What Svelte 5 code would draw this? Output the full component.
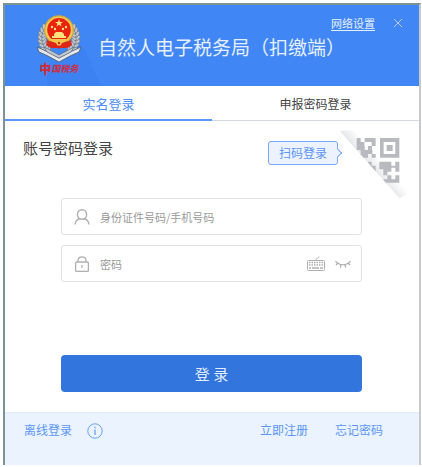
<script lang="ts">
  let mode = $state('realname');
  let account = $state('');
  let password = $state('');
  let showPassword = $state(false);

  // angles of the grains in the emblem wreath, bottom to top
  const grains = [-48, -36, -24, -12, 0, 12, 24, 36];
  const keys = [0, 1, 2, 3, 4, 5];
</script>

<div class="window">
  <header>
    <svg class="facet" viewBox="0 0 100 81" aria-hidden="true">
      <path d="M42 81V62L74 39L80 45L96 81Z" fill="#3d82f2" />
    </svg>
    <div class="emblem">
      <svg viewBox="0 0 46 48" width="46" height="48" aria-hidden="true">
        {#each grains as a}
          <g fill="#c0c6cd" stroke="#65717f" stroke-width="0.6">
            <ellipse cx="4.5" cy="24" rx="3.4" ry="1.8" transform="rotate({a} 23 24) rotate(50 4.5 24)" />
            <ellipse cx="8" cy="24" rx="3.2" ry="1.6" transform="rotate({a} 23 24) rotate(-50 8 24)" />
            <ellipse cx="41.5" cy="24" rx="3.4" ry="1.8" transform="rotate({-a} 23 24) rotate(-50 41.5 24)" />
            <ellipse cx="38" cy="24" rx="3.2" ry="1.6" transform="rotate({-a} 23 24) rotate(50 38 24)" />
          </g>
        {/each}
        <path d="M1 33L12 38L23 44L34 38L45 33L43 38L34 42L23 48L12 42L3 38Z" fill="#e4e8ec" stroke="#4b5868" stroke-width="0.8" />
        <path d="M8 33L23 41L38 33L35 38L23 44L11 38Z" fill="#c3cad2" stroke="#5d6877" stroke-width="0.7" />
        <path d="M12 24H34L36 31L31 34H15L10 31Z" fill="#dc281a" />
        <circle cx="23" cy="16" r="14.8" fill="#d8a836" />
        <circle cx="23" cy="16" r="13.6" fill="#efcc55" />
        <circle cx="23" cy="15.8" r="11.8" fill="#e9230f" />
        <path d="M23 5L24 8H27L24.6 9.8L25.5 12.5L23 10.8L20.5 12.5L21.4 9.8L19 8H22Z" fill="#ffe27a" />
        <g fill="#ffe27a">
          <circle cx="16" cy="13" r="1.2" /><circle cx="19" cy="15" r="1.2" />
          <circle cx="27" cy="15" r="1.2" /><circle cx="30" cy="13" r="1.2" />
          <path d="M18 20L20 18H26L28 20V22H30V24H16V22H18Z" />
        </g>
        <path d="M15 25H31L29 28H17Z" fill="#efc64b" />
        <path d="M14 27L23 30L32 27L34 33L27 31L23 35L19 31L12 33Z" fill="#dc281a" />
        <circle cx="23" cy="29" r="2.6" fill="#efc64b" />
        <circle cx="23" cy="29" r="1.2" fill="#dc281a" />
      </svg>
      <span class="motto"><b>中</b>国税务</span>
    </div>
    <h1>自然人电子税务局（扣缴端）</h1>
    <div class="window-tools">
      <a href="#network">网络设置</a>
      <button class="close" aria-label="关闭">
        <svg viewBox="0 0 10 10" width="10" height="10"><path d="M1 1L9 9M9 1L1 9" stroke="#b9cdf2" fill="none" /></svg>
      </button>
    </div>
  </header>

  <nav>
    <button class="tab" class:active={mode === 'realname'} onclick={() => mode = 'realname'}>实名登录</button>
    <button class="tab small" class:active={mode === 'declare'} onclick={() => mode = 'declare'}>申报密码登录</button>
  </nav>

  <main>
    <div class="heading">
      <h2>账号密码登录</h2>
      <button class="scan">扫码登录</button>
      <svg class="qr" viewBox="0 6 201 210" width="67" height="70" aria-hidden="true">
        <defs>
          <linearGradient id="fold" gradientUnits="userSpaceOnUse" x1="88" y1="118" x2="116" y2="94">
            <stop offset="0" stop-color="#e6e7e9" />
            <stop offset="1" stop-color="#fff" />
          </linearGradient>
          <clipPath id="page"><path d="M0 16V0H201V216H178Z" /></clipPath>
        </defs>
        <path d="M0 16L40 10L201 190V206L178 216Z" fill="url(#fold)" />
        <g clip-path="url(#page)" fill="#b9bac0">
          <path fill-rule="evenodd" d="M120 36H178V95H120ZM131 48V84H166V48ZM140 57H158V75H140Z" />
          <path d="M50 36H62V48H73V60H50ZM74 36H107V60H95V48H74ZM50 60H74V72H97V84H107V95H95V84H84V95H50V84H62V72H50ZM84 60H96V72H84Z" />
          <path d="M84 107H95V119H107V137H95V130H84Z" />
          <path d="M118 107H154V119H166V107H178V137H166V125H154V137H142V148H154V160H166V148H178V170H130V160H142V148H130V130H118Z" />
        </g>
      </svg>
    </div>

    <form onsubmit={(e) => e.preventDefault()}>
      <label class="field">
        <svg viewBox="0 0 16 16" width="16" height="16" fill="none" stroke="#b0b0b0" stroke-width="1.4">
          <ellipse cx="8" cy="5.5" rx="4.6" ry="4.8" />
          <path d="M1 15.5C1.5 12 3.5 10 6 9.7M15 15.5C14.5 12 12.5 10 10 9.7" />
        </svg>
        <input type="text" aria-label="身份证件号码/手机号码" placeholder="身份证件号码/手机号码" bind:value={account} />
      </label>
      <div class="field">
        <svg viewBox="0 0 16 16" width="16" height="16" fill="none" stroke="#b0b0b0" stroke-width="1.3">
          <rect x="1.6" y="6" width="12.8" height="9.4" rx="1" />
          <path d="M4 6V4.5C4 -0.3 12 -0.3 12 4.5V6M8 9V12" />
        </svg>
        <input type={showPassword ? 'text' : 'password'} aria-label="密码" placeholder="密码" bind:value={password} />
        <button type="button" class="icon" aria-label="软键盘">
          <svg viewBox="0 0 18 15" width="18" height="15" fill="none" stroke="#b0b0b0">
            <rect x="0.5" y="4.5" width="17" height="10" rx="1" />
            <path d="M9 4C9 1.5 12 3 12 0.5" />
            {#each keys as k}
              <path d="M{2 + k * 2.5} 6.5h1.5M{2 + k * 2.5} 9h1.5" stroke-width="1.4" />
            {/each}
            <path d="M2 12H4M5 12H12M13 12H16" stroke-width="1.3" />
          </svg>
        </button>
        <button type="button" class="icon" aria-label="显示密码" onclick={() => showPassword = !showPassword}>
          <svg viewBox="0 0 16 8" width="16" height="8" fill="none" stroke="#aaa" stroke-width="1.2">
            <path d="M0.5 1C4 6 12 6 15.5 1M3 3L1 5M6 4.6L5.3 7.5M10 4.6L10.7 7.5M13 3L15 5" />
          </svg>
        </button>
      </div>
      <button type="submit" class="login">登 录</button>
    </form>
  </main>

  <footer>
    <a href="#offline">离线登录</a>
    <button class="icon info" aria-label="说明">
      <svg viewBox="0 0 16 16" width="16" height="16" fill="none" stroke="#6ba2f6">
        <circle cx="8" cy="8" r="7.2" />
        <path d="M8 6.5V12M8 3.8V5.2" stroke-width="1.3" />
      </svg>
    </button>
    <a class="register" href="#register">立即注册</a>
    <a href="#forgot">忘记密码</a>
  </footer>
</div>

<style>
  :global(body) { background: #fff; }
  .window {
    margin: 3px 1px 0 3px; border: 2px solid #7d9294; border-right-color: #c8c9cb; border-bottom: none;
    background: #fff; color: #444; font-family: "Noto Sans CJK SC", sans-serif; font-size: 12px; line-height: 18px;
  }
  button, input { font: inherit; color: inherit; border: none; background: none; padding: 0; margin: 0; }
  button { cursor: pointer; }
  svg { display: block; flex: none; }
  h1, h2 { margin: 0; font-weight: 400; }

  header { position: relative; display: flex; height: 81px; background: #4087f5; color: #e6effd; }
  .facet { position: absolute; left: 0; top: 0; width: 100px; height: 81px; }
  .emblem { position: relative; width: 46px; margin: 9px 0 0 31px; }
  .motto {
    display: flex; align-items: center; justify-content: center; height: 14px;
    color: #d02a3a; font-size: 9px; font-style: italic; font-weight: 700; white-space: nowrap;
  }
  .motto b { font-size: 12px; font-style: normal; }
  h1 { margin: 28px 0 0 16px; font-size: 19px; line-height: 28px; white-space: nowrap; flex: 1; width: 0; }
  .window-tools { display: flex; align-items: center; gap: 18px; height: 18px; margin: 9px 16px 0 0; font-size: 11px; }
  .window-tools a { color: #e6effd; text-decoration: underline; text-underline-offset: 2px; }

  nav { display: flex; height: 35px; }
  .tab { flex: 1; padding-top: 2px; border-bottom: 1px solid #d3d8e3; font-size: 13px; }
  .tab.small { font-size: 12px; }
  .tab.active { color: #4c8cf5; border-bottom: 2px solid #5c98f6; }

  main { height: 291px; }
  .heading { display: flex; padding: 7px 12px 0 18px; }
  h2 { margin: 8px auto 0 0; font-size: 15px; line-height: 24px; }
  .scan {
    position: relative; width: 70px; height: 24px; margin: 13px 2px 0 0;
    border: 1px solid #76a8fa; border-radius: 3px; background: #edf3fe; color: #5c94f5;
  }
  .scan::after {
    content: ''; position: absolute; right: -4px; top: 8px; width: 5px; height: 5px;
    border: solid #76a8fa; border-width: 1px 1px 0 0; background: #edf3fe; transform: rotate(45deg);
  }
  form { display: flex; flex-direction: column; gap: 10px; padding: 0 57px 0 56px; }
  .field {
    display: flex; align-items: center; box-sizing: border-box; height: 37px; padding: 0 10px 0 12px;
    border: 1px solid #dfe0e3; border-radius: 3px; font-size: 11px;
  }
  .field input { flex: 1; min-width: 0; margin-left: 10px; outline: none; }
  .field input::placeholder { color: #999; opacity: 1; }
  .icon + .icon { margin-left: 10px; }
  .login { height: 37px; margin-top: 63px; border-radius: 4px; background: #3175dd; color: #e3edfb; font-size: 15px; }

  footer {
    display: flex; align-items: flex-start; box-sizing: border-box; height: 53px; padding: 8px 36px 0 19px;
    border-top: 1px solid #deedf9; background: #eaf3ff;
  }
  footer a { color: #5c96f5; text-decoration: none; }
  .info { margin: 2px 0 0 15px; }
  .register { margin: 0 27px 0 auto; }
</style>
